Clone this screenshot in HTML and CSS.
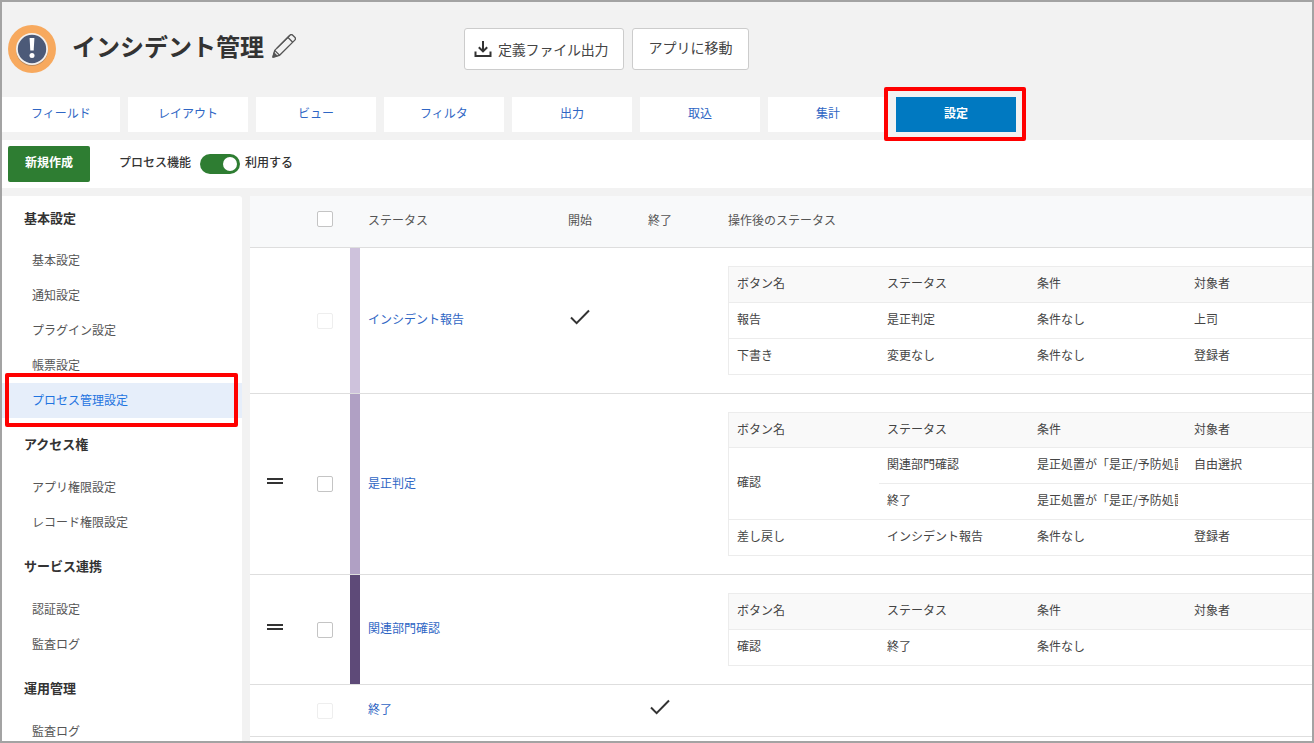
FILE: index.html
```html
<!DOCTYPE html>
<html lang="ja">
<head>
  <meta charset="UTF-8">
  <meta name="viewport" content="width=device-width, initial-scale=1.0">
  <title>インシデント管理</title>
  <link rel="stylesheet" href="styles.css">
</head>
<body>
  <div class="frame">
    <header class="app-header">
      <div class="title-block">
        <svg class="app-logo" viewBox="0 0 48 48" width="48" height="48">
          <circle cx="24" cy="24" r="24" fill="#f7a95e"/>
          <circle cx="24" cy="25" r="16" fill="#b98a5e"/>
          <circle cx="24" cy="24" r="16" fill="#f4f1ee"/>
          <circle cx="24" cy="24" r="14.2" fill="#4c5a78"/>
          <path d="M21.6 13h4.8l-.7 12.5h-3.4z" fill="#fff"/>
          <circle cx="24" cy="30.5" r="2.5" fill="#fff"/>
        </svg>
        <h1 class="app-title">インシデント管理</h1>
        <svg class="edit-icon" viewBox="0 0 24 24" width="24" height="24" fill="none" stroke="#555" stroke-width="1.3" stroke-linejoin="round">
          <path d="M1 23l1.7-6.6L17.9 1.2a2 2 0 0 1 2.8 0l2.1 2.1a2 2 0 0 1 0 2.8L7.6 21.3z"/>
          <path d="M15.8 3.3l4.9 4.9M5 14.1L17.2 2M2.7 16.4l4.9 4.9"/>
          <path d="M1 23l1-4 3 3z" fill="#555"/>
        </svg>
      </div>
      <button class="head-btn export-btn" type="button">
        <svg viewBox="0 0 18 18" width="18" height="18" fill="none" stroke="#333" stroke-width="2">
          <path d="M9 1v10M4.8 7.2L9 11.4l4.2-4.2M1.5 11.5v4.5h15v-4.5"/>
        </svg>
        <span>定義ファイル出力</span>
      </button>
      <button class="head-btn move-btn" type="button">アプリに移動</button>
    </header>

    <nav class="tabs">
      <a class="tab tab-first">フィールド</a>
      <a class="tab">レイアウト</a>
      <a class="tab">ビュー</a>
      <a class="tab">フィルタ</a>
      <a class="tab">出力</a>
      <a class="tab">取込</a>
      <a class="tab">集計</a>
      <a class="tab tab-active">設定<span class="mark mark-tab"></span></a>
    </nav>

    <div class="toolbar">
      <button class="new-btn" type="button">新規作成</button>
      <span class="toggle-label">プロセス機能</span>
      <span class="toggle"><span class="toggle-knob"></span></span>
      <span class="toggle-text">利用する</span>
    </div>

    <div class="content">
      <aside class="sidebar">
        <h2 class="side-head side-head-first">基本設定</h2>
        <a class="side-item">基本設定</a>
        <a class="side-item">通知設定</a>
        <a class="side-item">プラグイン設定</a>
        <a class="side-item">帳票設定</a>
        <a class="side-item side-active">プロセス管理設定<span class="mark mark-side"></span></a>
        <h2 class="side-head">アクセス権</h2>
        <a class="side-item">アプリ権限設定</a>
        <a class="side-item">レコード権限設定</a>
        <h2 class="side-head">サービス連携</h2>
        <a class="side-item">認証設定</a>
        <a class="side-item">監査ログ</a>
        <h2 class="side-head">運用管理</h2>
        <a class="side-item">監査ログ</a>
      </aside>

      <main class="panel">
        <div class="row row-head">
          <span></span>
          <span class="check-cell"><span class="checkbox"></span></span>
          <span></span>
          <span class="status-cell">ステータス</span>
          <span class="center-cell">開始</span>
          <span class="center-cell">終了</span>
          <span class="after-cell">操作後のステータス</span>
        </div>

        <div class="row">
          <span></span>
          <span class="check-cell"><span class="checkbox checkbox-off"></span></span>
          <span class="bar bar-1"></span>
          <a class="status-cell status-link">インシデント報告</a>
          <span class="center-cell">
            <svg class="tick" viewBox="0 0 20 16" width="20" height="16" fill="none" stroke="#333" stroke-width="2"><path d="M1 8.5l5.6 5.6L19 1.5"/></svg>
          </span>
          <span></span>
          <div class="after-cell">
            <table class="actions">
              <colgroup><col class="col-a"><col class="col-a"><col class="col-c"><col></colgroup>
              <tr><th>ボタン名</th><th>ステータス</th><th>条件</th><th>対象者</th></tr>
              <tr><td>報告</td><td>是正判定</td><td>条件なし</td><td>上司</td></tr>
              <tr><td>下書き</td><td>変更なし</td><td>条件なし</td><td>登録者</td></tr>
            </table>
          </div>
        </div>

        <div class="row">
          <span class="handle-cell">
            <svg viewBox="0 0 16 16" width="16" height="16" fill="#333"><path d="M0 2h16v2H0zM0 6h16v2H0z"/></svg>
          </span>
          <span class="check-cell"><span class="checkbox"></span></span>
          <span class="bar bar-2"></span>
          <a class="status-cell status-link">是正判定</a>
          <span></span>
          <span></span>
          <div class="after-cell">
            <table class="actions actions-short">
              <colgroup><col class="col-a"><col class="col-a"><col class="col-c"><col></colgroup>
              <tr><th>ボタン名</th><th>ステータス</th><th>条件</th><th>対象者</th></tr>
              <tr><td rowspan="2">確認</td><td>関連部門確認</td><td><div class="clip">是正処置が「是正/予防処置」を含む</div></td><td>自由選択</td></tr>
              <tr><td>終了</td><td><div class="clip">是正処置が「是正/予防処置」を含まない</div></td><td></td></tr>
              <tr><td>差し戻し</td><td>インシデント報告</td><td>条件なし</td><td>登録者</td></tr>
            </table>
          </div>
        </div>

        <div class="row">
          <span class="handle-cell">
            <svg viewBox="0 0 16 16" width="16" height="16" fill="#333"><path d="M0 2h16v2H0zM0 6h16v2H0z"/></svg>
          </span>
          <span class="check-cell"><span class="checkbox"></span></span>
          <span class="bar bar-3"></span>
          <a class="status-cell status-link">関連部門確認</a>
          <span></span>
          <span></span>
          <div class="after-cell">
            <table class="actions">
              <colgroup><col class="col-a"><col class="col-a"><col class="col-c"><col></colgroup>
              <tr><th>ボタン名</th><th>ステータス</th><th>条件</th><th>対象者</th></tr>
              <tr><td>確認</td><td>終了</td><td>条件なし</td><td></td></tr>
            </table>
          </div>
        </div>

        <div class="row row-last">
          <span></span>
          <span class="check-cell"><span class="checkbox checkbox-off"></span></span>
          <span></span>
          <a class="status-cell status-link">終了</a>
          <span></span>
          <span class="center-cell">
            <svg class="tick" viewBox="0 0 20 16" width="20" height="16" fill="none" stroke="#333" stroke-width="2"><path d="M1 8.5l5.6 5.6L19 1.5"/></svg>
          </span>
          <span></span>
        </div>
      </main>
    </div>
  </div>
</body>
</html>
```

FILE: styles.css
```css
* {
  box-sizing: border-box;
}

body {
  margin: 0;
  font-family: "Noto Sans CJK JP", "Noto Sans", sans-serif;
  font-size: 12px;
  color: #333;
}

.frame {
  height: 743px;
  overflow: hidden;
  border: 2px solid #a3a3a3;
  background-color: #f2f2f2;
}

/* header */
.app-header {
  display: flex;
  align-items: flex-start;
  height: 95px;
  padding-left: 6px;
}

.title-block {
  display: flex;
  align-items: flex-start;
  width: 456px;
  padding-top: 23px;
}

.app-title {
  margin: 2px 0 0 16px;
  font-size: 24px;
  line-height: 38px;
  font-weight: 700;
  color: #333;
}

.edit-icon {
  margin: 9px 0 0 8px;
}

.head-btn {
  display: flex;
  align-items: center;
  height: 42px;
  margin-top: 26px;
  margin-right: 8px;
  padding: 0 0 4px;
  border: 1px solid #ccc;
  border-radius: 3px;
  background-color: #fff;
  font-family: inherit;
  font-size: 14px;
  color: #444;
}

.move-btn {
  width: 117px;
  justify-content: center;
}

.export-btn {
  width: 160px;
  padding: 0 0 0 9px;
  gap: 6px;
}

.export-btn span {
  padding-bottom: 1px;
  letter-spacing: -0.2px;
}

/* tabs */
.tabs {
  display: flex;
  gap: 8px;
  height: 43px;
  padding-bottom: 8px;
}

.tab {
  position: relative;
  display: flex;
  align-items: center;
  justify-content: center;
  width: 120px;
  padding-bottom: 4px;
  background-color: #fff;
  color: #2f66c4;
}

.tab-first {
  width: 118px;
}

.tab-active {
  background-color: #0079c1;
  color: #fff;
  font-weight: 700;
}

/* red annotation boxes */
.mark {
  position: absolute;
  border: 4px solid #f00;
  border-radius: 2px;
}

.mark-tab {
  top: -10px;
  left: -12px;
  right: -10px;
  bottom: -9px;
}

.mark-side {
  top: -10px;
  left: 3px;
  width: 233px;
  bottom: -9px;
}

/* toolbar */
.toolbar {
  display: flex;
  align-items: center;
  height: 48px;
  padding-left: 6px;
  background-color: #fff;
}

.new-btn {
  width: 82px;
  height: 36px;
  margin-right: 29px;
  padding: 0 0 5px;
  border: none;
  border-radius: 2px;
  background-color: #2e7d32;
  font-family: inherit;
  font-size: 12px;
  font-weight: 700;
  color: #fff;
}

.toggle-label,
.toggle-text {
  font-weight: 500;
  color: #333;
  padding-bottom: 5px;
}

.toggle {
  display: flex;
  align-items: center;
  justify-content: flex-end;
  width: 40px;
  height: 20px;
  margin: 0 5px 0 9px;
  padding-right: 3px;
  border-radius: 10px;
  background-color: #2e7d32;
}

.toggle-knob {
  width: 14px;
  height: 14px;
  border-radius: 50%;
  background-color: #fff;
}

/* sidebar + panel */
.content {
  display: flex;
  gap: 8px;
  height: 553px;
  padding-top: 8px;
  overflow: hidden;
}

.sidebar {
  flex: 0 0 240px;
  border-radius: 0 3px 0 0;
  background-color: #fff;
}

.side-head {
  margin: 0;
  height: 52px;
  padding-left: 22px;
  font-size: 13px;
  line-height: 51px;
  font-weight: 700;
  color: #333;
}

.side-head-first {
  height: 47px;
  line-height: 44px;
}

.side-item {
  position: relative;
  display: block;
  height: 35px;
  padding-left: 30px;
  line-height: 33px;
  color: #555;
}

.side-active {
  background-color: #e6eefa;
  color: #1f74e0;
}

.panel {
  flex: 1;
  min-width: 0;
  border-radius: 3px 0 0 0;
  background-color: #fff;
}

.row {
  display: grid;
  grid-template-columns: 50px 50px 10px 180px 80px 80px 1fr;
  align-items: center;
  border-bottom: 1px solid #dedede;
}

.row-head {
  height: 52px;
  padding-bottom: 5px;
  background-color: #f8f9fa;
}

.row-last {
  height: 52px;
}

.check-cell,
.handle-cell,
.center-cell {
  display: flex;
  justify-content: center;
}

.checkbox {
  width: 16px;
  height: 16px;
  border: 1px solid #c4c4c4;
  border-radius: 2px;
  background-color: #fff;
}

.checkbox-off {
  border-color: #eee;
}

.bar {
  align-self: stretch;
}

.bar-1 {
  background-color: #cec2dc;
}

.bar-2 {
  background-color: #b0a0c4;
}

.bar-3 {
  background-color: #5e4a78;
}

.status-cell {
  padding-left: 8px;
  color: #555;
}

.status-link {
  padding-bottom: 4px;
  color: #2f66c4;
}

.center-cell {
  color: #555;
}

.tick {
  margin-top: -8px;
}

.after-cell {
  padding: 18px 0 18px 28px;
  color: #555;
  min-width: 0;
}

.row-head .after-cell {
  padding-top: 0;
  padding-bottom: 0;
}

.actions {
  width: 100%;
  table-layout: fixed;
  border-collapse: separate;
  border-spacing: 0;
  border-top: 1px solid #ececec;
  border-left: 1px solid #ececec;
}

.col-a {
  width: 150px;
}

.col-c {
  width: 157px;
}

.actions th,
.actions td {
  height: 36px;
  padding: 0 8px 4px;
  border-bottom: 1px solid #ececec;
  font-weight: 400;
  text-align: left;
  color: #444;
  white-space: nowrap;
}

.actions th {
  background-color: #f9f9f9;
}

.actions-short th {
  height: 35px;
}

.clip {
  overflow: hidden;
}
```
